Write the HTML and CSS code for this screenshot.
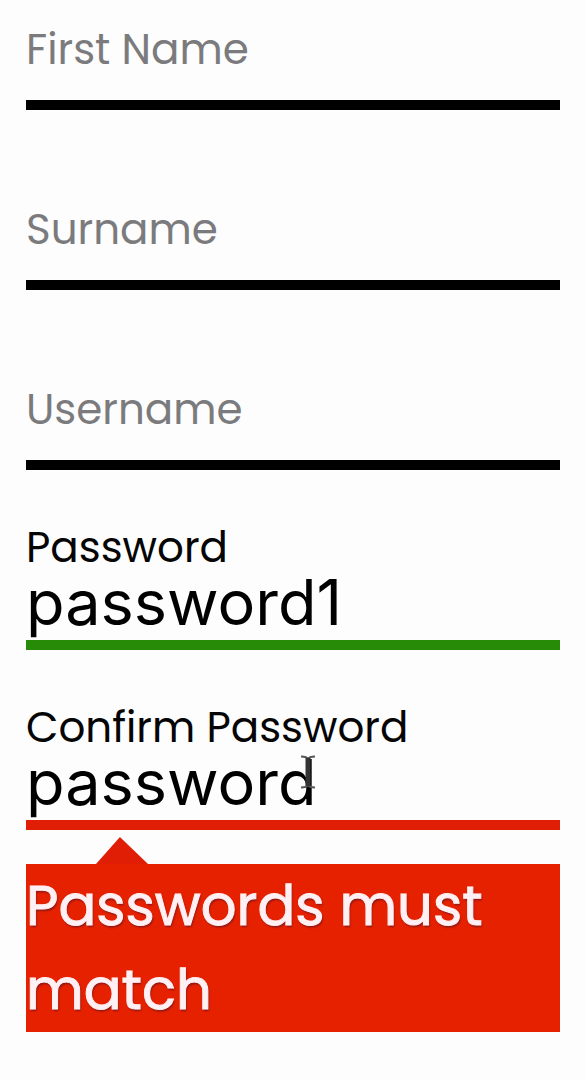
FILE: index.html
```html
<!DOCTYPE html>
<html lang="en">
<head>
<meta charset="utf-8">
<meta name="viewport" content="width=device-width, initial-scale=1">
<title>Sign up</title>
<link rel="stylesheet" href="styles.css">
</head>
<body>
<form class="form" novalidate>
  <div class="field field--empty">
    <label class="label" for="first">First Name</label>
    <input class="input" id="first" type="text">
  </div>
  <div class="field field--empty">
    <label class="label" for="surname">Surname</label>
    <input class="input" id="surname" type="text">
  </div>
  <div class="field field--empty">
    <label class="label" for="username">Username</label>
    <input class="input" id="username" type="text">
  </div>
  <div class="field field--valid">
    <label class="label" for="password">Password</label>
    <input class="input" id="password" type="text" value="password1">
  </div>
  <div class="field field--invalid">
    <label class="label" for="confirm">Confirm Password</label>
    <input class="input" id="confirm" type="text" value="password" aria-describedby="confirm-error">
    <svg class="cursor" viewBox="0 0 14 34" aria-hidden="true">
      <path d="M0 1.5C4 1.5 6 2 7 4C8 2 10 1.5 14 1.5M0 32.500C4 32.500 6 32 7 30C8 32 10 32.500 14 32.500"/>
      <path class="cursor-stem" d="M7 3V31"/>
    </svg>
  </div>
  <p class="error" id="confirm-error" role="alert">Passwords must match</p>
</form>
</body>
</html>
```
FILE: styles.css
```css
* {
  box-sizing: border-box;
}

body {
  margin: 0;
  background: #fdfdfd;
  color: #050505;
  font-family: Poppins, Inter, sans-serif;
}

.form {
  padding: 0 26px;
}

.field {
  position: relative;
  display: flex;
  flex-direction: column;
  justify-content: flex-end;
  min-height: 128px;
  margin-bottom: 52px;
}

.field:first-child {
  min-height: 110px;
}

.label {
  padding-top: 2px;
  font-size: 42px;
  line-height: 48px;
}

.input {
  width: 100%;
  height: 78px;
  padding: 0 0 8px;
  border: 0;
  border-bottom: 10px solid #000;
  border-radius: 0;
  outline: 0;
  background: transparent;
  color: #000;
  font: 63px/64px Inter, sans-serif;
}

.field--empty .label {
  color: #7b7b7d;
}

.field--empty .input {
  height: 36px;
}

.field--valid .input {
  border-color: #278b08;
}

.field--invalid {
  margin-bottom: 34px;
}

.field--invalid .input {
  border-color: #e01e05;
}

.cursor {
  position: absolute;
  top: 53px;
  left: 275px;
  width: 14px;
  height: 34px;
  fill: none;
  stroke: #555;
  stroke-width: 2;
}

.cursor-stem {
  stroke: #333;
  stroke-width: 5;
}

.error {
  position: relative;
  margin: 0;
  background: #e62100;
  color: #fff0f4;
  font-size: 56px;
  line-height: 84px;
  text-shadow: 1px 2px 2px #8b1717;
  -webkit-text-stroke: 1px #fff0f4;
}

.error::before {
  content: "";
  position: absolute;
  bottom: 100%;
  left: 70px;
  width: 52px;
  height: 27px;
  background: #e01e05;
  clip-path: polygon(0 100%, 46% 0, 100% 100%);
}
```
